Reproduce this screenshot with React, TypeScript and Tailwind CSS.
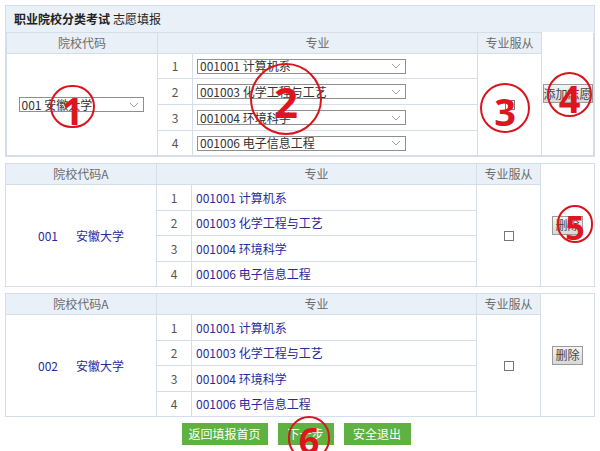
import React from "react";

const majors = [
  "001001 计算机系",
  "001003 化学工程与工艺",
  "001004 环境科学",
  "001006 电子信息工程",
];

const rowH = ["h-[25px]", "h-[26px]", "h-[26px]", "h-[25px]"];

function Chevron() {
  return (
    <svg width="10" height="6" viewBox="0 0 10 6" className="shrink-0">
      <path d="M1 1 L5 5 L9 1" fill="none" stroke="#888" strokeWidth="0.8" />
    </svg>
  );
}

function Select({ text, w }: { text: string; w: string }) {
  return (
    <div
      className={`flex h-[15px] ${w} items-center justify-between border border-[#8f8f8f] bg-white pl-[2px] pr-[4px] text-[12px] leading-none text-[#333]`}
    >
      <span>{text}</span>
      <Chevron />
    </div>
  );
}

function Checkbox() {
  return <div className="mx-auto h-[10px] w-[10px] border border-[#777] bg-white" />;
}

function GrayButton({ label, w }: { label: string; w: string }) {
  return (
    <div
      className={`mx-auto flex h-[19px] ${w} items-center justify-center border border-[#9a9a9a] bg-gradient-to-b from-[#f4f4f4] to-[#d8d8d8] text-[12px] text-[#444]`}
    >
      {label}
    </div>
  );
}

const th = "border border-[#d5dee8] bg-[#e9f0f8] text-[12px] font-normal text-[#6b6b6b]";
const td = "border border-[#d5dee8]";

function EditTable() {
  return (
    <div className="border border-[#d5dee8]">
      <div className="flex h-[26px] items-center bg-[#e9f0f8] pl-[8px] text-[12px] text-[#222]">
        <span className="font-bold">职业院校分类考试</span>
        <span className="ml-[3px]">志愿填报</span>
      </div>
      <table className="w-full table-fixed border-collapse">
        <colgroup>
          <col className="w-[151px]" />
          <col className="w-[35px]" />
          <col className="w-[285px]" />
          <col className="w-[64px]" />
          <col />
        </colgroup>
        <tbody>
          <tr className="h-[21px]">
            <th className={th}>院校代码</th>
            <th className={th} colSpan={2}>
              专业
            </th>
            <th className={th}>专业服从</th>
            <td className={`${td} border-t-0`} rowSpan={5}>
              <GrayButton label="添加志愿" w="w-[50px]" />
            </td>
          </tr>
          {majors.map((m, i) => (
            <tr key={m} className={rowH[i]}>
              {i === 0 && (
                <td className={td} rowSpan={4}>
                  <div className="flex justify-center pr-[2px]">
                    <Select text="001 安徽大学" w="w-[125px]" />
                  </div>
                </td>
              )}
              <td className={`${td} text-center text-[12px] text-[#555]`}>{i + 1}</td>
              <td className={`${td} pl-[4px]`}>
                <Select text={m} w="w-[209px]" />
              </td>
              {i === 0 && (
                <td className={td} rowSpan={4}>
                  <Checkbox />
                </td>
              )}
            </tr>
          ))}
        </tbody>
      </table>
    </div>
  );
}

function ResultTable({ code }: { code: string }) {
  return (
    <table className="w-full table-fixed border-collapse border border-[#d5dee8]">
      <colgroup>
        <col className="w-[151px]" />
        <col className="w-[35px]" />
        <col className="w-[285px]" />
        <col className="w-[64px]" />
        <col />
      </colgroup>
      <tbody>
        <tr className="h-[21px]">
          <th className={th}>院校代码A</th>
          <th className={th} colSpan={2}>
            专业
          </th>
          <th className={th}>专业服从</th>
          <td className={td} rowSpan={5}>
            <GrayButton label="删除" w="w-[31px]" />
          </td>
        </tr>
        {majors.map((m, i) => (
          <tr key={m} className={i % 2 === 0 ? "h-[26px]" : "h-[25px]"}>
            {i === 0 && (
              <td className={`${td} text-center text-[12px] text-[#2a2aa0]`} rowSpan={4}>
                <span className="pr-[6px]">{code}</span>
                <span className="ml-[12px]">安徽大学</span>
              </td>
            )}
            <td className={`${td} text-center text-[12px] text-[#555]`}>{i + 1}</td>
            <td className={`${td} pl-[4px] text-[12px] text-[#2a2aa0]`}>{m}</td>
            {i === 0 && (
              <td className={td} rowSpan={4}>
                <Checkbox />
              </td>
            )}
          </tr>
        ))}
      </tbody>
    </table>
  );
}

function Mark({ n, cls, size }: { n: number; cls: string; size: string }) {
  return (
    <div
      className={`absolute flex items-center justify-center rounded-full border-2 border-[#d8151f] font-bold leading-none text-[#e0141e] ${cls} ${size}`}
      style={{ fontFamily: "'Open Sans', 'Liberation Sans', sans-serif" }}
    >
      <span className="translate-y-[3px]">{n}</span>
    </div>
  );
}

export default function App() {
  return (
    <div
      className="relative h-[451px] w-[600px] overflow-hidden bg-white px-[5px] pt-[5px]"
      style={{ fontFamily: "'Noto Sans CJK SC', 'Noto Sans', sans-serif" }}
    >
      <EditTable />
      <div className="mt-[6px]">
        <ResultTable code="001" />
      </div>
      <div className="mt-[6px]">
        <ResultTable code="002" />
      </div>
      <div className="mt-[6px] flex justify-center gap-[10px] pr-[8px]">
        <div className="flex h-[22px] w-[86px] items-center justify-center bg-[#5fb142] text-[12px] text-white">
          返回填报首页
        </div>
        <div className="flex h-[22px] w-[56px] items-center justify-center bg-[#5fb142] text-[12px] text-white">
          下一步
        </div>
        <div className="flex h-[22px] w-[67px] items-center justify-center bg-[#5fb142] text-[12px] text-white">
          安全退出
        </div>
      </div>

      <Mark n={1} cls="left-[50px] top-[85px] text-[38px]" size="h-[43px] w-[45px]" />
      <Mark n={2} cls="left-[250px] top-[63px] text-[42px]" size="h-[72px] w-[72px]" />
      <Mark n={3} cls="left-[480px] top-[83px] text-[38px]" size="h-[50px] w-[50px]" />
      <Mark n={4} cls="left-[547px] top-[72px] text-[38px]" size="h-[45px] w-[45px]" />
      <Mark n={5} cls="left-[557px] top-[205px] text-[34px]" size="h-[38px] w-[36px]" />
      <Mark n={6} cls="left-[288px] top-[416px] text-[36px]" size="h-[44px] w-[42px]" />
    </div>
  );
}
